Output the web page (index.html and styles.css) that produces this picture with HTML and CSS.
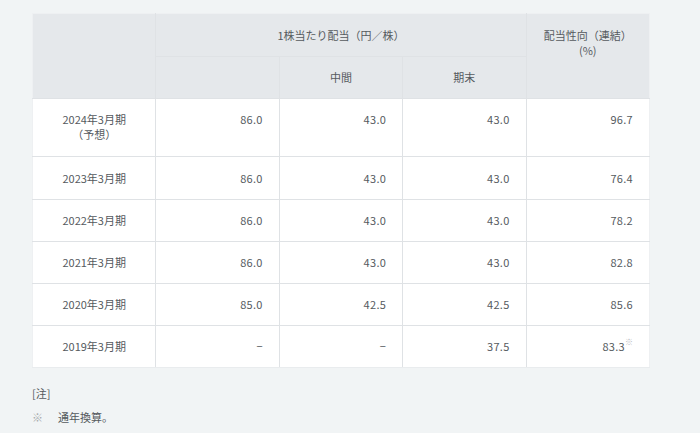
FILE: index.html
```html
<!DOCTYPE html>
<html lang="ja">
<head>
<meta charset="utf-8">
<title>配当</title>
<link rel="stylesheet" href="styles.css">
</head>
<body>
<div class="page">
  <table class="div-table">
    <colgroup>
      <col class="c"><col class="c"><col class="c"><col class="c"><col class="c">
    </colgroup>
    <thead>
      <tr>
        <th rowspan="2"></th>
        <th colspan="3">1株当たり配当（円／株）</th>
        <th rowspan="2" class="top">配当性向（連結）<br>(%)</th>
      </tr>
      <tr>
        <th class="sub"></th>
        <th>中間</th>
        <th>期末</th>
      </tr>
    </thead>
    <tbody>
      <tr class="first"><th class="yr">2024年3月期<br>（予想）</th><td>86.0</td><td>43.0</td><td>43.0</td><td>96.7</td></tr>
      <tr><th class="yr">2023年3月期</th><td>86.0</td><td>43.0</td><td>43.0</td><td>76.4</td></tr>
      <tr><th class="yr">2022年3月期</th><td>86.0</td><td>43.0</td><td>43.0</td><td>78.2</td></tr>
      <tr><th class="yr">2021年3月期</th><td>86.0</td><td>43.0</td><td>43.0</td><td>82.8</td></tr>
      <tr><th class="yr">2020年3月期</th><td>85.0</td><td>42.5</td><td>42.5</td><td>85.6</td></tr>
      <tr class="last"><th class="yr">2019年3月期</th><td>−</td><td>−</td><td>37.5</td><td>83.3<sup class="mark">※</sup></td></tr>
    </tbody>
  </table>
  <div class="notes">
    <p class="note-title">[注]</p>
    <p class="note"><span class="kome">※</span><span>通年換算。</span></p>
  </div>
</div>
</body>
</html>
```
FILE: styles.css
```css
html, body {
  margin: 0;
  padding: 0;
  background: #f1f4f5;
}
body {
  font-family: "Noto Sans CJK JP", "Noto Sans", sans-serif;
  font-size: 11px;
  color: #555a5e;
}
.page {
  padding: 13px 0 0 32px;
}
.div-table {
  width: 618px;
  border-collapse: collapse;
  table-layout: fixed;
  background: #ffffff;
}
.div-table col.c {
  width: 20%;
}
.div-table th,
.div-table td {
  border: 1px solid #dfe2e5;
  padding: 13px 16px 13px 16px;
  line-height: 15px;
  font-weight: normal;
  vertical-align: top;
}
.div-table thead th {
  background: #e5e8eb;
  text-align: center;
  height: 15px;
}
.div-table thead tr:first-child th {
  padding-top: 14px;
  padding-bottom: 13px;
}
.div-table thead th.top {
  padding-top: 14px;
}
.div-table tbody tr.first > * {
  padding-bottom: 14px;
}
.div-table tbody tr.first + tr > * {
  padding-top: 14px;
}
.div-table tbody td {
  letter-spacing: 0.3px;
}
.div-table tbody th.yr {
  text-align: center;
  background: #ffffff;
  letter-spacing: 0;
}
.div-table tbody td {
  text-align: right;
}
.div-table tr:first-child > th:first-child,
.div-table tbody tr > th:first-child {
  border-left-color: #eef0f2;
}
.div-table thead tr:first-child th {
  border-top-color: #eef0f2;
}
.div-table tr > :last-child {
  border-right-color: #eef0f2;
}
.div-table tbody tr.last > * {
  border-bottom-color: #e9ecee;
}
.mark {
  font-size: 8px;
  color: #b9bcbf;
  vertical-align: top;
  line-height: 8px;
  position: relative;
  top: -1px;
  letter-spacing: 0;
}
.notes {
  padding-top: 18px;
}
.notes p {
  margin: 0;
  line-height: 15px;
}
.note-title {
  margin-bottom: 9px !important;
}
.note {
  display: flex;
}
.kome {
  width: 26px;
  color: #a7abae;
}
```
